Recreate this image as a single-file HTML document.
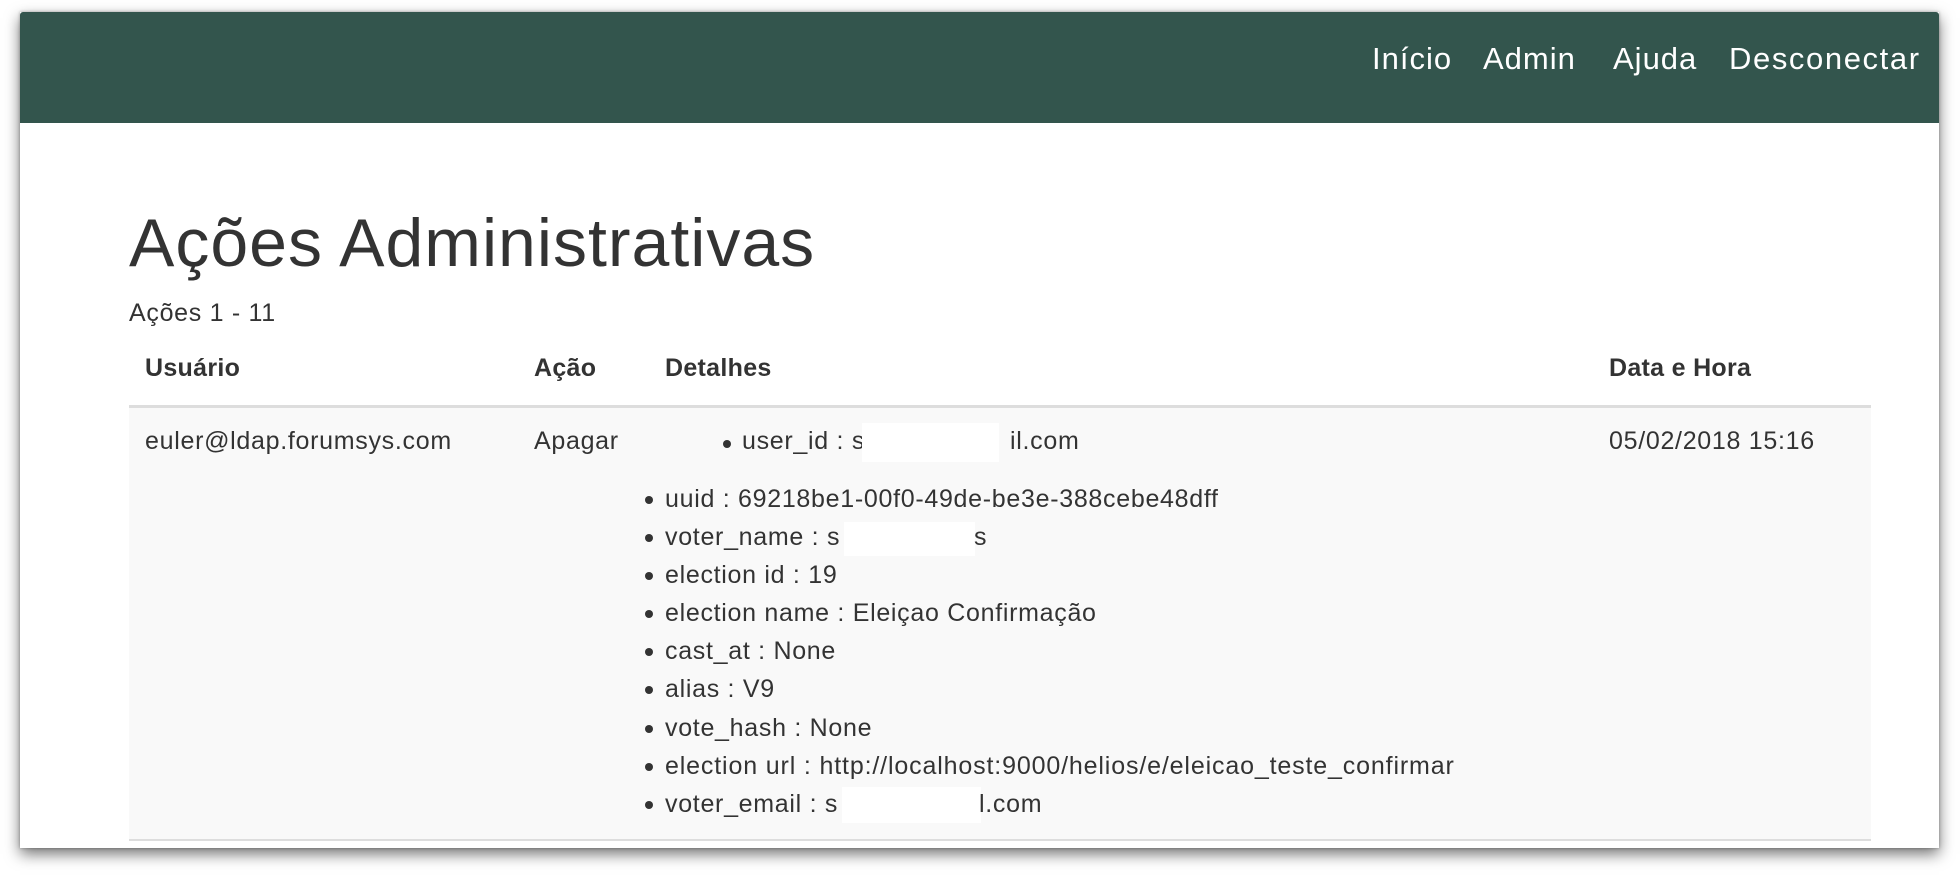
<!DOCTYPE html>
<html><head><meta charset="utf-8"><style>
*{margin:0;padding:0;box-sizing:border-box}
html,body{width:1960px;height:877px;background:#fff;overflow:hidden;font-family:"Liberation Sans",Arial,sans-serif;color:#333}
.win{position:absolute;left:20px;top:12px;width:1919px;height:836px;background:#fff;box-shadow:0 6px 14px rgba(0,0,0,.55),0 0 3px rgba(0,0,0,.3)}
.nav{position:absolute;left:0;top:0;width:100%;height:111px;background:#33554d;border-radius:3px 3px 0 0}
.nav span{position:absolute;top:29px;color:#fff;font-size:31px;letter-spacing:1px}
.t{position:absolute;white-space:nowrap}
.row{position:absolute;left:109px;top:393px;width:1742px;height:436px;background:#f9f9f9;border-top:3px solid #ddd;border-bottom:2px solid #ddd}
.b{font-size:25px;letter-spacing:.7px}
.dot{position:absolute;width:8px;height:8px;border-radius:50%;background:#333}
.mask{position:absolute;background:#fff}
</style></head><body>
<div class="win">
 <div class="nav">
  <span style="left:1352px">Início</span>
  <span style="left:1463px">Admin</span>
  <span style="left:1593px">Ajuda</span>
  <span style="left:1709px;letter-spacing:1.6px">Desconectar</span>
 </div>
 <div class="t" style="left:109px;top:192px;font-size:68px;letter-spacing:1px">Ações Administrativas</div>
 <div class="t b" style="left:109px;top:287px">Ações 1 - 11</div>
 <div class="t b" style="left:125px;top:342px;font-weight:bold;letter-spacing:.3px">Usuário</div>
 <div class="t b" style="left:514px;top:342px;font-weight:bold;letter-spacing:.3px">Ação</div>
 <div class="t b" style="left:645px;top:342px;font-weight:bold;letter-spacing:.3px">Detalhes</div>
 <div class="t b" style="left:1589px;top:342px;font-weight:bold;letter-spacing:.3px">Data e Hora</div>
 <div class="row"></div>
 <div class="t b" style="left:125px;top:415px">euler@ldap.forumsys.com</div>
 <div class="t b" style="left:514px;top:415px">Apagar</div>
 <div class="t b" style="left:1589px;top:415px">05/02/2018 15:16</div>
 <div class="dot" style="left:703px;top:428px"></div>
 <div class="t b" style="left:722px;top:415px">user_id : s</div>
 <div class="mask" style="left:842px;top:411px;width:137px;height:39px"></div>
 <div class="t b" style="left:990px;top:415px">il.com</div>
</div>
<div style="position:absolute;left:20px;top:12px">
 <div class="dot" style="left:625px;top:484px"></div><div class="t b" style="left:645px;top:473px">uuid : 69218be1-00f0-49de-be3e-388cebe48dff</div>
 <div class="dot" style="left:625px;top:522px"></div><div class="t b" style="left:645px;top:511px">voter_name : s</div>
 <div class="mask" style="left:824px;top:510px;width:131px;height:34px"></div>
 <div class="t b" style="left:954px;top:511px">s</div>
 <div class="dot" style="left:625px;top:560px"></div><div class="t b" style="left:645px;top:549px">election id : 19</div>
 <div class="dot" style="left:625px;top:598px"></div><div class="t b" style="left:645px;top:587px">election name : Eleiçao Confirmação</div>
 <div class="dot" style="left:625px;top:636px"></div><div class="t b" style="left:645px;top:625px">cast_at : None</div>
 <div class="dot" style="left:625px;top:674px"></div><div class="t b" style="left:645px;top:663px">alias : V9</div>
 <div class="dot" style="left:625px;top:713px"></div><div class="t b" style="left:645px;top:702px">vote_hash : None</div>
 <div class="dot" style="left:625px;top:751px"></div><div class="t b" style="left:645px;top:740px;letter-spacing:.85px">election url : http://localhost:9000/helios/e/eleicao_teste_confirmar</div>
 <div class="dot" style="left:625px;top:789px"></div><div class="t b" style="left:645px;top:778px">voter_email : s</div>
 <div class="mask" style="left:822px;top:775px;width:139px;height:36px"></div>
 <div class="t b" style="left:959px;top:778px">l.com</div>
</div>
</body></html>
